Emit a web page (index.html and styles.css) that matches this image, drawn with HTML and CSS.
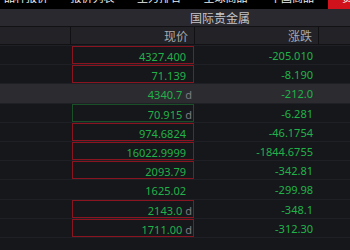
FILE: index.html
```html
<!DOCTYPE html>
<html>
<head>
<meta charset="utf-8">
<link rel="stylesheet" href="styles.css">
</head>
<body>
<div class="tabs">
  <div class="tab-row">
    <div class="tab">品种报价</div>
    <div class="tab">报价列表</div>
    <div class="tab">主力排名</div>
    <div class="tab">全球商品</div>
    <div class="tab">中国商品</div>
    <div class="tab active">贵金属</div>
  </div>
</div>
<div class="title"><span>国际贵金属</span></div>
<div class="grid head">
  <div class="cell c1"></div>
  <div class="cell c2">现价</div>
  <div class="cell c3">涨跌</div>
  <div class="cell c4"></div>
</div>
<div class="body">
  <div class="grid row"><div class="cell c1"></div><div class="cell c2"><div class="box red">4327.400</div></div><div class="cell c3">-205.010</div><div class="cell c4"></div></div>
  <div class="grid row"><div class="cell c1"></div><div class="cell c2"><div class="box red">71.139</div></div><div class="cell c3">-8.190</div><div class="cell c4"></div></div>
  <div class="grid row hl"><div class="cell c1"></div><div class="cell c2"><div class="box plain dd">4340.7<span class="d">d</span></div></div><div class="cell c3">-212.0</div><div class="cell c4"></div></div>
  <div class="grid row"><div class="cell c1"></div><div class="cell c2"><div class="box green dd">70.915<span class="d">d</span></div></div><div class="cell c3">-6.281</div><div class="cell c4"></div></div>
  <div class="grid row"><div class="cell c1"></div><div class="cell c2"><div class="box red">974.6824</div></div><div class="cell c3">-46.1754</div><div class="cell c4"></div></div>
  <div class="grid row"><div class="cell c1"></div><div class="cell c2"><div class="box red">16022.9999</div></div><div class="cell c3">-1844.6755</div><div class="cell c4"></div></div>
  <div class="grid row"><div class="cell c1"></div><div class="cell c2"><div class="box red">2093.79</div></div><div class="cell c3">-342.81</div><div class="cell c4"></div></div>
  <div class="grid row"><div class="cell c1"></div><div class="cell c2"><div class="box plain">1625.02</div></div><div class="cell c3">-299.98</div><div class="cell c4"></div></div>
  <div class="grid row"><div class="cell c1"></div><div class="cell c2"><div class="box red dd">2143.0<span class="d">d</span></div></div><div class="cell c3">-348.1</div><div class="cell c4"></div></div>
  <div class="grid row"><div class="cell c1"></div><div class="cell c2"><div class="box red dd">1711.00<span class="d">d</span></div></div><div class="cell c3">-312.30</div><div class="cell c4"></div></div>
  <div class="grid row"><div class="cell c1"></div><div class="cell c2"></div><div class="cell c3"></div><div class="cell c4"></div></div>
</div>
</body>
</html>
```
FILE: styles.css
```css
* { box-sizing: border-box; }
html, body {
  margin: 0;
  padding: 0;
  background: #16171b;
  width: 350px;
  height: 250px;
  overflow: hidden;
  font-family: "Noto Sans", "Noto Sans CJK SC", sans-serif;
}
.tabs {
  height: 9px;
  background: #000;
  overflow: hidden;
}
.tab-row {
  display: flex;
  gap: 4.5px;
  margin-left: -5px;
  margin-top: -10px;
}
.tab {
  flex: 0 0 62px;
  height: 19px;
  line-height: 14px;
  text-align: center;
  font-size: 11px;
  color: #ececec;
  font-family: "Noto Sans CJK SC", sans-serif;
}
.tab.active {
  background: #d0121c;
  color: #fff;
}
.title {
  height: 17px;
  background: #29292f;
  padding-left: 190px;
  font-size: 12px;
  line-height: 18px;
  color: #c4c4c8;
  font-family: "Noto Sans CJK SC", sans-serif;
}
.grid {
  display: grid;
  grid-template-columns: 71px 124px 124px 1fr;
}
.head {
  height: 19px;
  background: #222227;
  border-top: 1px solid #121215;
  border-bottom: 1px solid #121215;
  font-size: 12px;
  color: #a8a8ae;
  font-family: "Noto Sans CJK SC", sans-serif;
}
.head .cell {
  border-right: 1px solid #111114;
  text-align: right;
  line-height: 17px;
  padding-right: 6px;
}
.head .c4 { border-right: none; }
.row {
  height: 19.2px;
  border-top: 1px solid #1f2025;
  font-size: 11px;
  color: #22b24a;
}
.row.hl { background: #2b2b30; }
.row .c3 {
  text-align: right;
  padding-right: 6px;
  padding-top: 1px;
  line-height: 18px;
}
.box {
  margin: 0 1px;
  height: 18px;
  line-height: 17px;
  padding-top: 1px;
  text-align: right;
  padding-right: 7px;
  border: 1px solid transparent;
}
.box.red { border-color: #8a1420; }
.box.green { border-color: #1a5028; }
.box.dd { padding-right: 1px; }
.d {
  color: #7c7c80;
  margin-left: 3px;
}
```
